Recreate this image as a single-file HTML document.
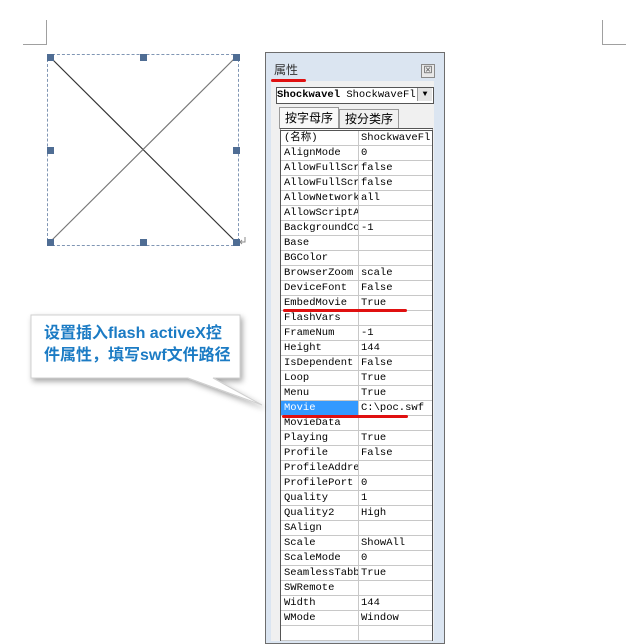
<!DOCTYPE html><html><head><meta charset="utf-8"><style>
body{margin:0;width:632px;height:628px;background:#fff;position:relative;overflow:hidden;font-family:"Liberation Mono","Noto Sans CJK SC",monospace}
.a{position:absolute}
.h{position:absolute;width:7px;height:7px;background:#4f6d94}
.panel{left:265px;top:52px;width:178px;height:590px;border:1px solid #6d6d6d;background:#dbe5f1}
.inner{left:5px;top:28px;width:163px;height:560px;background:#f0f0f0}
.grid{left:280px;top:128px;width:151px;border:1px solid #555;border-top:3px double #555;border-bottom:none;background:#fff}
.row{height:15px;box-sizing:border-box;border-bottom:1px solid #c8c8c8;font-size:10.5px;line-height:14px;display:flex}
.row span{display:block;overflow:hidden;white-space:nowrap}
.row .n{width:78px;border-right:1px solid #c8c8c8;padding-left:3px;box-sizing:border-box}
.row .v{padding-left:2px;flex:1}
</style></head><body>
<div class="a" style="left:46px;top:20px;width:1px;height:25px;background:#a0a0a0"></div>
<div class="a" style="left:23px;top:44px;width:24px;height:1px;background:#a0a0a0"></div>
<div class="a" style="left:602px;top:20px;width:1px;height:25px;background:#a0a0a0"></div>
<div class="a" style="left:602px;top:44px;width:24px;height:1px;background:#a0a0a0"></div>
<div class="a" style="left:47px;top:54px;width:190px;height:190px;border:1px dashed #8096b4"></div>
<svg class="a" style="left:0;top:0" width="632" height="628"><line x1="50" y1="57" x2="236" y2="242" stroke="#333" stroke-width="1.2"/><line x1="236" y1="57" x2="50" y2="242" stroke="#777" stroke-width="1.2"/>
<path d="M245 237v5h-5M240 242l2-2M240 242l2 2" stroke="#888" fill="none"/></svg>
<div class="h" style="left:47px;top:54px"></div><div class="h" style="left:140px;top:54px"></div><div class="h" style="left:233px;top:54px"></div>
<div class="h" style="left:47px;top:147px"></div><div class="h" style="left:233px;top:147px"></div>
<div class="h" style="left:47px;top:239px"></div><div class="h" style="left:140px;top:239px"></div><div class="h" style="left:233px;top:239px"></div>

<div class="a panel"><div class="a inner"></div>
<div class="a" style="left:8px;top:9px;font-size:12px;line-height:16px;color:#333;font-family:'Noto Sans CJK SC',sans-serif">属性</div>
<div class="a" style="left:155px;top:11px;width:12px;height:12px;border:1px solid #8a8a8a;background:#e8e8e8;font-size:9px;line-height:12px;text-align:center;color:#444">⊠</div>
</div>
<div class="a" style="left:271px;top:79px;width:35px;height:3px;background:#e01010;border-radius:2px"></div>
<div class="a" style="left:276px;top:87px;width:156px;height:15px;border:1px solid #555;background:#fff;font-size:10.5px;line-height:15px;white-space:nowrap;overflow:hidden"><b>Shockwavel</b> ShockwaveFl</div>
<div class="a" style="left:417px;top:88px;width:14px;height:13px;background:#e4e4e4;border-left:1px solid #999;font-size:8px;text-align:center;line-height:13px">▼</div>
<div class="a" style="left:279px;top:107px;width:58px;height:21px;border:1px solid #999;border-bottom:none;background:#f8f8f8;font-size:12px;line-height:20px;text-align:center;font-family:'Noto Sans CJK SC',sans-serif">按字母序</div>
<div class="a" style="left:339px;top:109px;width:58px;height:19px;border:1px solid #999;border-bottom:none;font-size:12px;line-height:18px;text-align:center;font-family:'Noto Sans CJK SC',sans-serif">按分类序</div>
<div class="a grid">
<div class="row"><span class="n">(名称)</span><span class="v">ShockwaveFl:</span></div>
<div class="row"><span class="n">AlignMode</span><span class="v">0</span></div>
<div class="row"><span class="n">AllowFullScre</span><span class="v">false</span></div>
<div class="row"><span class="n">AllowFullScre</span><span class="v">false</span></div>
<div class="row"><span class="n">AllowNetworki</span><span class="v">all</span></div>
<div class="row"><span class="n">AllowScriptAc</span><span class="v"></span></div>
<div class="row"><span class="n">BackgroundCol</span><span class="v">-1</span></div>
<div class="row"><span class="n">Base</span><span class="v"></span></div>
<div class="row"><span class="n">BGColor</span><span class="v"></span></div>
<div class="row"><span class="n">BrowserZoom</span><span class="v">scale</span></div>
<div class="row"><span class="n">DeviceFont</span><span class="v">False</span></div>
<div class="row"><span class="n">EmbedMovie</span><span class="v">True</span></div>
<div class="row"><span class="n">FlashVars</span><span class="v"></span></div>
<div class="row"><span class="n">FrameNum</span><span class="v">-1</span></div>
<div class="row"><span class="n">Height</span><span class="v">144</span></div>
<div class="row"><span class="n">IsDependent</span><span class="v">False</span></div>
<div class="row"><span class="n">Loop</span><span class="v">True</span></div>
<div class="row"><span class="n">Menu</span><span class="v">True</span></div>
<div class="row"><span class="n" style="background:#3399ff;color:#fff">Movie</span><span class="v">C:\poc.swf</span></div>
<div class="row"><span class="n">MovieData</span><span class="v"></span></div>
<div class="row"><span class="n">Playing</span><span class="v">True</span></div>
<div class="row"><span class="n">Profile</span><span class="v">False</span></div>
<div class="row"><span class="n">ProfileAddres</span><span class="v"></span></div>
<div class="row"><span class="n">ProfilePort</span><span class="v">0</span></div>
<div class="row"><span class="n">Quality</span><span class="v">1</span></div>
<div class="row"><span class="n">Quality2</span><span class="v">High</span></div>
<div class="row"><span class="n">SAlign</span><span class="v"></span></div>
<div class="row"><span class="n">Scale</span><span class="v">ShowAll</span></div>
<div class="row"><span class="n">ScaleMode</span><span class="v">0</span></div>
<div class="row"><span class="n">SeamlessTabbi</span><span class="v">True</span></div>
<div class="row"><span class="n">SWRemote</span><span class="v"></span></div>
<div class="row"><span class="n">Width</span><span class="v">144</span></div>
<div class="row"><span class="n">WMode</span><span class="v">Window</span></div>
<div class="row"><span class="n"></span><span class="v"></span></div>
</div>
<div class="a" style="left:283px;top:309px;width:124px;height:3px;background:#e01010;border-radius:2px"></div>
<div class="a" style="left:282px;top:415px;width:126px;height:3px;background:#e01010;border-radius:2px"></div>
<svg class="a" style="left:0;top:0" width="632" height="628"><defs><filter id="s"><feDropShadow dx="2" dy="3" stdDeviation="3" flood-color="#000" flood-opacity="0.35"/></filter></defs>
<path d="M31 315H240V378H213L262 405L188 378H31Z" fill="#fff" stroke="#d0d0d0" filter="url(#s)"/></svg>
<div class="a" style="left:44px;top:323px;width:192px;font-size:16px;line-height:22px;font-weight:bold;color:#1b7bc4;font-family:'Liberation Sans','Noto Sans CJK SC',sans-serif;white-space:nowrap">设置插入flash activeX控<br>件属性，填写swf文件路径</div>
</body></html>
